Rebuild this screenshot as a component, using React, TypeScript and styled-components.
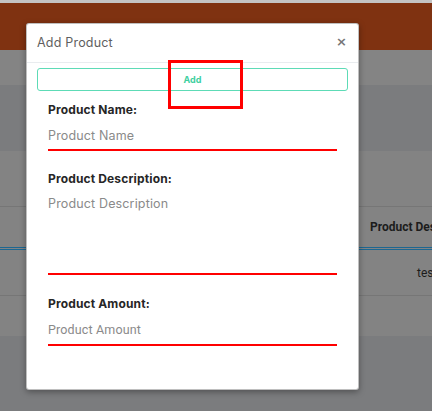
import React from 'react';
import styled, { createGlobalStyle } from 'styled-components';

const GlobalStyle = createGlobalStyle`
  html, body {
    margin: 0;
    padding: 0;
    background: #7b7c7e;
    overflow: hidden;
  }
  * { box-sizing: border-box; }
`;

const Page = styled.div`
  position: relative;
  width: 432px;
  height: 411px;
  overflow: hidden;
  font-family: Inter, "Noto Sans", Arial, sans-serif;
  background: #7b7c7e;
`;

const TopLine = styled.div`
  height: 3px;
  background: #c4c4c4;
`;

const NavBar = styled.div`
  height: 47px;
  background: #7f3211;
`;

const Band = styled.div<{ $h: number; $bg: string }>`
  height: ${p => p.$h}px;
  background: ${p => p.$bg};
`;

const Table = styled.div`
  background: #838383;
`;

const Toolbar = styled.div`
  height: 56px;
  border-bottom: 1px solid #767676;
`;

const HeadRow = styled.div`
  height: 43px;
  display: flex;
  align-items: center;
  justify-content: flex-end;
  border-bottom: 3px double #1d6791;
  font-family: Roboto, "Liberation Sans", Arial, sans-serif;
  font-size: 12px;
  font-weight: 700;
  color: #1c1c1c;
  white-space: nowrap;
`;

const Cell = styled.div<{ $pad: number }>`
  padding-left: ${p => p.$pad}px;
  width: 62px;
  overflow: hidden;
  white-space: nowrap;
`;

const BodyRow = styled.div`
  height: 46px;
  display: flex;
  align-items: center;
  justify-content: flex-end;
  border-bottom: 1px solid #767676;
  font-family: Roboto, "Liberation Sans", Arial, sans-serif;
  font-size: 12px;
  color: #1c1c1c;
`;

const Modal = styled.div`
  position: absolute;
  left: 26px;
  top: 23px;
  width: 333px;
  height: 367px;
  background: #fff;
  border: 1px solid rgba(0, 0, 0, 0.25);
  border-radius: 3px;
  box-shadow: 0 2px 6px rgba(0, 0, 0, 0.35);
`;

const ModalHeader = styled.div`
  height: 39px;
  display: flex;
  align-items: center;
  justify-content: space-between;
  padding: 0 11px 0 10px;
  border-bottom: 1px solid #e9ecef;
`;

const Title = styled.h5`
  margin: -2px 0 0;
  font-size: 12.5px;
  font-weight: 400;
  color: #5f5f5f;
  letter-spacing: 0.2px;
`;

const Close = styled.span`
  font-family: "DejaVu Sans", Arial, sans-serif;
  font-size: 13px;
  font-weight: 700;
  color: #777;
  margin-top: -4px;
`;

const ModalBody = styled.div`
  padding: 5px 10px 0;
`;

const AddButton = styled.button`
  display: block;
  width: 100%;
  height: 23px;
  background: #fff;
  border: 1px solid #5ddbb6;
  border-radius: 3px;
  color: #3fcf9f;
  font-family: Inter, "Noto Sans", Arial, sans-serif;
  font-size: 9px;
  font-weight: 700;
  padding: 0;
`;

const Form = styled.div`
  padding: 0 11px;
`;

const Label = styled.label<{ $top: number }>`
  display: block;
  margin-top: ${p => p.$top}px;
  font-size: 12px;
  font-weight: 700;
  color: #262626;
  letter-spacing: 0.15px;
  line-height: 18px;
`;

const Field = styled.div<{ $h: number; $top: number; $family?: string }>`
  height: ${p => p.$h}px;
  margin-top: 3px;
  padding-top: ${p => p.$top}px;
  border-bottom: 2px solid #ff0000;
  font-family: ${p => p.$family || 'Inter, "Noto Sans", Arial, sans-serif'};
  font-size: 12.5px;
  color: #8a8a8a;
  letter-spacing: 0.15px;
  line-height: 16px;
`;

const Highlight = styled.div`
  position: absolute;
  left: 168px;
  top: 60px;
  width: 75px;
  height: 49px;
  border: 3px solid #ff0000;
`;

export default function App() {
  return (
    <Page>
      <GlobalStyle />
      <TopLine />
      <NavBar />
      <Band $h={35} $bg="#848484" />
      <Band $h={66} $bg="#7b7c7e" />
      <Table>
        <Toolbar />
        <HeadRow>
          <Cell $pad={0}>Product Des</Cell>
        </HeadRow>
        <BodyRow>
          <Cell $pad={47}>tes</Cell>
        </BodyRow>
        <Band $h={40} $bg="#838383" />
      </Table>

      <Modal>
        <ModalHeader>
          <Title>Add Product</Title>
          <Close>×</Close>
        </ModalHeader>
        <ModalBody>
          <AddButton>Add</AddButton>
          <Form>
            <Label $top={10}>Product Name:</Label>
            <Field $h={29} $top={6}>Product Name</Field>
            <Label $top={19}>Product Description:</Label>
            <Field $h={84} $top={5}>Product Description</Field>
            <Label $top={20}>Product Amount:</Label>
            <Field $h={30} $top={6} $family={'Roboto, "Liberation Sans", Arial, sans-serif'}>Product Amount</Field>
          </Form>
        </ModalBody>
      </Modal>

      <Highlight />
    </Page>
  );
}
